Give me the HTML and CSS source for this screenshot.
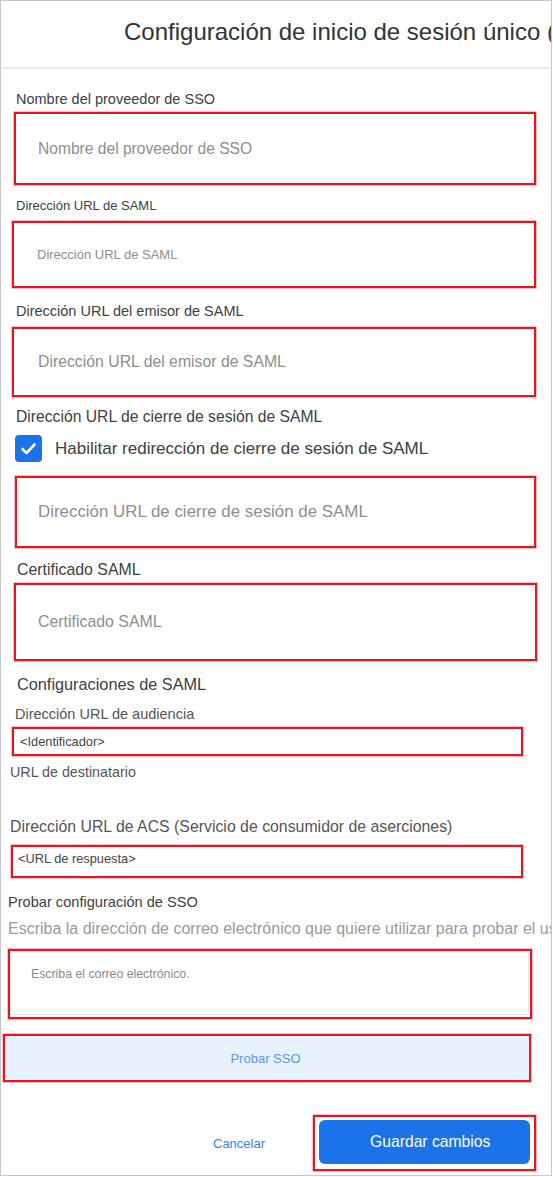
FILE: index.html
```html
<!DOCTYPE html>
<html lang="es">
<head>
<meta charset="utf-8">
<title>Configuración de inicio de sesión único</title>
<link rel="stylesheet" href="styles.css">
</head>
<body>
<div class="frame">
  <div class="header">
    <h1 class="title">Configuración de inicio de sesión único (SSO)</h1>
  </div>

  <div class="label l1">Nombre del proveedor de SSO</div>
  <div class="box b1"><span class="ph ph1">Nombre del proveedor de SSO</span></div>

  <div class="label l2">Dirección URL de SAML</div>
  <div class="box b2"><span class="ph ph2">Dirección URL de SAML</span></div>

  <div class="label l3">Dirección URL del emisor de SAML</div>
  <div class="box b3"><span class="ph ph3">Dirección URL del emisor de SAML</span></div>

  <div class="label l4">Dirección URL de cierre de sesión de SAML</div>
  <div class="check-row">
    <span class="checkbox">
      <svg viewBox="0 0 27 27" width="27" height="27"><polyline points="7.5,14 11.5,18 19.5,9.5" fill="none" stroke="#fff" stroke-width="2.6" stroke-linecap="round" stroke-linejoin="round"/></svg>
    </span>
    <span class="check-label">Habilitar redirección de cierre de sesión de SAML</span>
  </div>
  <div class="box b4"><span class="ph ph4">Dirección URL de cierre de sesión de SAML</span></div>

  <div class="label l5">Certificado SAML</div>
  <div class="box b5"><span class="ph ph5">Certificado SAML</span></div>

  <div class="label section">Configuraciones de SAML</div>
  <div class="label l6">Dirección URL de audiencia</div>
  <div class="box b6"><span class="val">&lt;Identificador&gt;</span></div>
  <div class="label l7">URL de destinatario</div>

  <div class="label l8">Dirección URL de ACS (Servicio de consumidor de aserciones)</div>
  <div class="box b7"><span class="val">&lt;URL de respuesta&gt;</span></div>

  <div class="label l9">Probar configuración de SSO</div>
  <div class="hint">Escriba la dirección de correo electrónico que quiere utilizar para probar el usuario de SSO.</div>
  <div class="box b8">
    <div class="textarea"><span class="ph ph8">Escriba el correo electrónico.</span></div>
  </div>
  <div class="box b9"><span class="test-btn">Probar SSO</span></div>

  <div class="footer">
    <span class="cancel">Cancelar</span>
    <div class="box b10"><span class="save-btn">Guardar cambios</span></div>
  </div>
</div>
</body>
</html>
```

FILE: styles.css
```css
html, body {
  margin: 0;
  padding: 0;
  background: #ffffff;
}
body {
  font-family: "Liberation Sans", Arial, sans-serif;
  color: #3c3c3c;
  overflow: hidden;
}
.frame {
  box-sizing: border-box;
  width: 552px;
  height: 1176px;
  border: 1px solid #c6c6c6;
  overflow: hidden;
  background: #fff;
}
.header {
  box-sizing: border-box;
  height: 68px;
  border-bottom: 2px solid #ebebeb;
  padding: 19px 0 0 123px;
  white-space: nowrap;
  overflow: hidden;
}
.title {
  margin: 0;
  font-size: 24px;
  line-height: 24px;
  font-weight: normal;
  color: #333;
}
.label {
  line-height: 20px;
  height: 20px;
  white-space: nowrap;
  color: #404040;
}
.box {
  box-sizing: border-box;
  border: 2px solid #e8141f;
  box-shadow: 0 0 0 0.6px rgba(232, 20, 31, 0.45);
  display: flex;
  align-items: center;
  white-space: nowrap;
  overflow: hidden;
}
.ph {
  color: #8e8e8e;
}
.l1 { margin: 20px 0 0 15px; font-size: 14.5px; }
.b1 { margin: 3px 0 0 13px; width: 522px; height: 73px; padding-left: 22px; }
.ph1 { font-size: 15.6px; }

.l2 { margin: 11px 0 0 15px; font-size: 13px; }
.b2 { margin: 5px 0 0 11px; width: 524px; height: 67px; padding-left: 23px; }
.ph2 { font-size: 13px; }

.l3 { margin: 13px 0 0 15px; font-size: 14.5px; }
.b3 { margin: 6px 0 0 11px; width: 524px; height: 70px; padding-left: 24px; }
.ph3 { font-size: 15.8px; }

.l4 { margin: 10px 0 0 15px; font-size: 15.7px; }
.check-row {
  margin: 8px 0 0 14px;
  height: 27px;
  display: flex;
  align-items: center;
  gap: 13px;
}
.checkbox {
  width: 27px;
  height: 27px;
  border-radius: 4px;
  background: #1a73e8;
  display: flex;
}
.check-label {
  font-size: 17px;
  color: #404040;
  white-space: nowrap;
}
.b4 { margin: 14px 0 0 14px; width: 521px; height: 72px; padding-left: 21px; }
.ph4 { font-size: 16.9px; }

.l5 { margin: 12px 0 0 16px; font-size: 15.9px; }
.b5 { margin: 3px 0 0 13px; width: 523px; height: 78px; padding-left: 22px; }
.ph5 { font-size: 15.9px; }

.section { margin: 13px 0 0 16px; font-size: 16.3px; }
.l6 { margin: 10px 0 0 14px; font-size: 14.5px; color: #555; }
.b6 { margin: 3px 0 0 11px; width: 511px; height: 29px; padding-left: 6px; }
.val { font-size: 12.8px; color: #444; }
.l7 { margin: 6px 0 0 9px; font-size: 14.3px; color: #555; }

.l8 { margin: 35px 0 0 9px; font-size: 15.85px; color: #555; }
.b7 { margin: 8px 0 0 10px; width: 512px; height: 33px; padding: 0 0 6px 5px; }

.l9 { margin: 14px 0 0 7px; font-size: 14.6px; }
.hint {
  margin: 7px 0 0 7px;
  height: 20px;
  line-height: 20px;
  font-size: 16px;
  color: #9a9a9a;
  white-space: nowrap;
}
.b8 {
  margin: 10px 0 0 7px;
  width: 524px;
  height: 70px;
  padding: 0 1px 2px 0;
  align-items: stretch;
}
.textarea {
  flex: 1;
  border: 1px solid #e4e4e4;
  border-radius: 2px;
  padding: 12px 0 0 20px;
}
.ph8 { font-size: 12.3px; color: #8a8a8a; line-height: 16px; }

.b9 {
  margin: 15px 0 0 2px;
  width: 528px;
  height: 48px;
  justify-content: center;
  background: #e8f2fd;
}
.test-btn { font-size: 13px; color: #5b97e4; padding-right: 3px; }

.footer {
  margin: 33px 0 0 0;
  padding-left: 212px;
  display: flex;
  align-items: center;
  gap: 48px;
}
.cancel {
  font-size: 13px;
  color: #3a82e4;
  padding-top: 1px;
}
.b10 {
  width: 223px;
  height: 56px;
  padding: 3px 4px 5px 4px;
  align-items: stretch;
}
.save-btn {
  flex: 1;
  background: #1a73e8;
  border-radius: 6px;
  color: #fff;
  font-size: 15.7px;
  display: flex;
  align-items: center;
  padding-left: 51px;
}
```
